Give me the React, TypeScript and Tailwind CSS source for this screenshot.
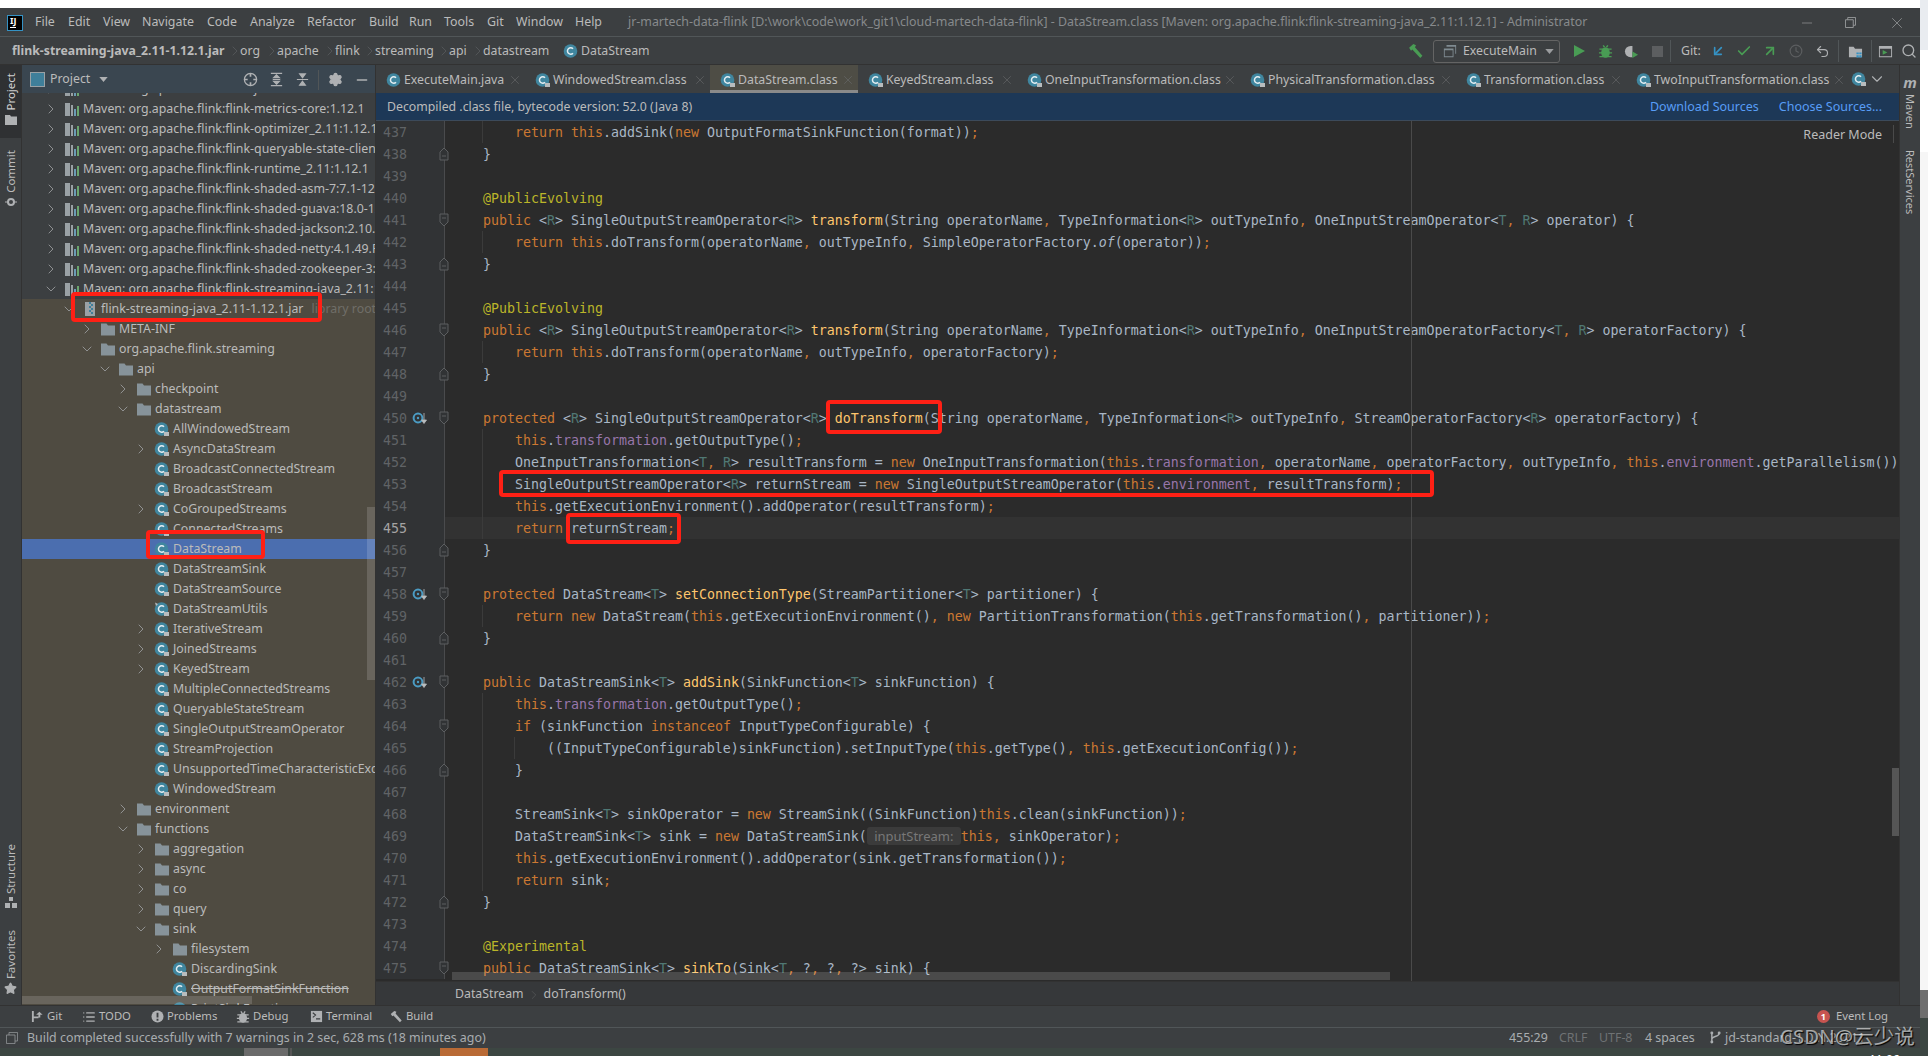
import { ReactNode } from "react";
import { ArrowDownLeft, ArrowUpRight, Check, ChevronDown, ChevronRight, Clock, List, Minus, Search, Settings, Star, Undo2, X } from "lucide-react";

/* ---------- icons ---------- */

function ClassIcon({ lock = true, pin = false }: { lock?: boolean; pin?: boolean }) {
  return (
    <svg viewBox="0 0 16 16" className="w-4 h-4 shrink-0">
      <circle cx="7.5" cy="8" r="6.8" fill="#40869f" />
      <path d="M10 5.8A3.2 3.2 0 1 0 10 10.2" fill="none" stroke="#e4eef2" strokeWidth="1.5" />
      {lock && <rect x="10" y="11" width="5" height="4" fill="#b8bcbe" />}
      {pin && <path d="M1 1.5 4 3 2 5z" fill="#b8bcbe" />}
    </svg>
  );
}

function FolderIcon() {
  return (
    <svg viewBox="0 0 16 16" className="w-4 h-4 shrink-0">
      <path d="M1 2.5h5.5l1.5 2h7v10H1z" fill="#87939a" />
    </svg>
  );
}

function LibIcon() {
  return (
    <svg viewBox="0 0 16 16" className="w-4 h-4 shrink-0">
      <path d="M1 2h5v13H1zM7 4h2v11H7z" fill="#9aa1a5" />
      <path d="M10 8h2v7h-2z" fill="#6c9cb5" />
      <path d="M13 5h2v10h-2z" fill="#6ba56f" />
    </svg>
  );
}

function JarIcon() {
  return (
    <svg viewBox="0 0 16 16" className="w-4 h-4 shrink-0">
      <rect x="3" y="1" width="10" height="14" fill="#9aa1a5" />
      <path d="M7 1h2v2H7zM9 3h2v2H9zM7 5h2v2H7zM9 7h2v2H9zM7 9h2v2H7zM9 11h2v2H9z" fill="#3f7f9a" />
    </svg>
  );
}

function OverrideIcon() {
  return (
    <svg viewBox="0 0 16 16" className="w-4 h-4">
      <circle cx="6" cy="8" r="4.4" fill="none" stroke="#4b9cc4" strokeWidth="2" />
      <circle cx="6" cy="8" r="1.2" fill="#4b9cc4" />
      <path d="M12 3v7M9.5 10h5L12 13.5z" fill="#b9bcbe" stroke="#b9bcbe" strokeWidth="0.8" />
    </svg>
  );
}

function FoldStart() {
  return (
    <svg viewBox="0 0 10 14" className="w-2.5 h-3.5">
      <path d="M1 1h8v8l-4 4-4-4z" fill="#313335" stroke="#5c5e60" />
      <path d="M3 5h4" stroke="#5c5e60" />
    </svg>
  );
}

function FoldEnd() {
  return (
    <svg viewBox="0 0 10 14" className="w-2.5 h-3.5">
      <path d="M1 13h8V5L5 1 1 5z" fill="#313335" stroke="#5c5e60" />
      <path d="M3 9h4" stroke="#5c5e60" />
    </svg>
  );
}

function Hammer({ className = "" }: { className?: string }) {
  return (
    <svg viewBox="0 0 16 16" className={className}>
      <path d="M2 4.5 6 1l2.5 1 -1 2L14.5 12 12.5 14 5 6.2 3.8 7.2z" fill="currentColor" />
    </svg>
  );
}

function BugIcon({ className = "" }: { className?: string }) {
  return (
    <svg viewBox="0 0 16 16" className={className}>
      <ellipse cx="8" cy="9" rx="4.6" ry="5.6" fill="currentColor" />
      <path d="M1.5 5.5h13M1 9.5h14M1.5 13.5h13M5.5 1.5 7 3.5M10.5 1.5 9 3.5" stroke="currentColor" strokeWidth="1.5" />
    </svg>
  );
}

/* ---------- title bar ---------- */

const menus = [
  { t: "File", w: "w-[33px]" },
  { t: "Edit", w: "w-[35px]" },
  { t: "View", w: "w-[39px]" },
  { t: "Navigate", w: "w-[65px]" },
  { t: "Code", w: "w-[43px]" },
  { t: "Analyze", w: "w-[57px]" },
  { t: "Refactor", w: "w-[62px]" },
  { t: "Build", w: "w-[40px]" },
  { t: "Run", w: "w-[35px]" },
  { t: "Tools", w: "w-[43px]" },
  { t: "Git", w: "w-[29px]" },
  { t: "Window", w: "w-[59px]" },
  { t: "Help", w: "w-[53px]" },
];

function TitleBar() {
  return (
    <div className="h-[29px] shrink-0 flex items-center bg-[#3c3f41] border-b border-[#515658] text-[12.4px] text-[#bbbbbb] pt-px">
      <div className="ml-[7px] mr-[12px] w-4 h-4 bg-black border border-[#3592c4] text-white text-[9px] font-bold leading-[8px] pl-[2px] pt-[1px]">
        IJ
        <div className="w-[6px] h-px mt-[2px] bg-white" />
      </div>
      {menus.map((m) => (
        <div key={m.t} className={`${m.w} shrink-0`}>
          {m.t}
        </div>
      ))}
      <div className="text-[#878a8c] whitespace-nowrap">
        jr-martech-data-flink [D:\work\code\work_git1\cloud-martech-data-flink] - DataStream.class [Maven: org.apache.flink:flink-streaming-java_2.11:1.12.1] - Administrator
      </div>
      <div className="ml-auto flex items-center text-[#9a9c9e]">
        <Minus className="w-4 h-4 mr-[30px]" strokeWidth={1} />
        <svg viewBox="0 0 12 12" className="w-[11px] h-[11px] mr-[32px]">
          <path d="M.5 3h8.5v8.500H.5zM3 3V.5h8.500V9H9" fill="none" stroke="currentColor" />
        </svg>
        <X className="w-[18px] h-[18px] mr-[14px]" strokeWidth={1} />
      </div>
    </div>
  );
}

/* ---------- navigation bar ---------- */

const crumbs = [
  { t: "org", w: "w-[37px]" },
  { t: "apache", w: "w-[58px]" },
  { t: "flink", w: "w-[40px]" },
  { t: "streaming", w: "w-[74px]" },
  { t: "api", w: "w-[34px]" },
  { t: "datastream", w: "w-[80px]" },
];

function Sep() {
  return <div className="w-px h-[22px] bg-[#515658]" />;
}

function NavButton({ children }: { children: ReactNode }) {
  return <div className="w-[26px] flex justify-center">{children}</div>;
}

function NavBar() {
  return (
    <div className="h-[28px] shrink-0 flex items-center bg-[#3c3f41] border-b border-[#323232] text-[12.3px] text-[#bbbbbb] pt-px">
      <div className="w-[240px] pl-3 font-bold shrink-0 whitespace-nowrap">flink-streaming-java_2.11-1.12.1.jar</div>
      {crumbs.map((c) => (
        <div key={c.t} className={`${c.w} shrink-0 relative`}>
          {c.t}
          <ChevronRight className="absolute -left-[13px] top-[1px] w-4 h-4 text-[#5e6163]" strokeWidth={1} />
        </div>
      ))}
      <ClassIcon lock={false} />
      <div className="ml-[2px]">DataStream</div>
      <div className="ml-auto flex items-center">
        <Hammer className="w-[17px] h-[17px] text-[#499c54] mr-[9px]" />
        <div className="w-[127px] h-[23px] flex items-center border border-[#646464] rounded-[3px] pl-[9px]">
          <svg viewBox="0 0 16 16" className="w-[14px] h-[14px] mr-[6px] text-[#7f8b91]">
            <path d="M4 1h11v10h-1V3H4zM1 5h11v10H1zM2 7v7h9V7z" fill="currentColor" />
          </svg>
          ExecuteMain
          <svg viewBox="0 0 10 6" className="w-[9px] h-[5px] ml-[8px] text-[#9a9c9e]">
            <path d="M0 0h10L5 6z" fill="currentColor" />
          </svg>
        </div>
        <div className="w-[6px]" />
        <NavButton>
          <svg viewBox="0 0 14 14" className="w-[14px] h-[14px] text-[#499c54]">
            <path d="M2 1l11 6-11 6z" fill="currentColor" />
          </svg>
        </NavButton>
        <NavButton>
          <BugIcon className="w-[15px] h-[15px] text-[#499c54]" />
        </NavButton>
        <NavButton>
          <svg viewBox="0 0 16 16" className="w-[15px] h-[15px]">
            <path d="M7 2A6 6 0 1 0 7 14H9V2z" fill="#afb1b3" />
            <path d="M9 8l6 3.500-6 3.500z" fill="#499c54" />
          </svg>
        </NavButton>
        <NavButton>
          <div className="w-[11px] h-[11px] bg-[#5c5e60]" />
        </NavButton>
        <div className="mr-[10px]">
          <Sep />
        </div>
        <div className="w-[24px]">Git:</div>
        <NavButton>
          <ArrowDownLeft className="w-4 h-4 text-[#3592c4]" strokeWidth={2.5} />
        </NavButton>
        <NavButton>
          <Check className="w-4 h-4 text-[#499c54]" strokeWidth={2.5} />
        </NavButton>
        <NavButton>
          <ArrowUpRight className="w-4 h-4 text-[#499c54]" strokeWidth={2.5} />
        </NavButton>
        <NavButton>
          <Clock className="w-[14px] h-[14px] text-[#5c5e60]" />
        </NavButton>
        <NavButton>
          <Undo2 className="w-[15px] h-[15px] text-[#afb1b3]" strokeWidth={1.8} />
        </NavButton>
        <div className="ml-[3px]">
          <Sep />
        </div>
        <div className="w-[32px] flex justify-center">
          <svg viewBox="0 0 16 16" className="w-[15px] h-[15px]">
            <path d="M1 3h5l1.500 2H15v9H1z" fill="#afb1b3" />
            <path d="M9 9h2.500v2H9zM12 9h2.500v2H12zM9 12h2.500v2.500H9zM12 12h2.500v2.500H12z" fill="#3592c4" />
          </svg>
        </div>
        <Sep />
        <div className="w-[26px] flex justify-center">
          <svg viewBox="0 0 16 16" className="w-[15px] h-[15px]">
            <path d="M1 2h14v12H1zM2 5v8h12V5z" fill="#afb1b3" />
            <path d="M5 6.500l5 2.500-5 2.500z" fill="#499c54" />
          </svg>
        </div>
        <div className="w-[22px] flex justify-center">
          <Search className="w-4 h-4 text-[#afb1b3]" strokeWidth={2} />
        </div>
      </div>
    </div>
  );
}

/* ---------- side strips ---------- */

function LeftStrip() {
  return (
    <div className="w-[22px] shrink-0 flex flex-col items-center bg-[#3c3f41] border-r border-[#323232] text-[11.5px] text-[#bbbbbb]">
      <div className="w-full h-[73px] bg-[#2f3133] flex flex-col items-center pt-[8px]">
        <span className="[writing-mode:vertical-rl] rotate-180 text-[#d0d0d0]">Project</span>
        <svg viewBox="0 0 12 12" className="w-[12px] h-[12px] mt-[3px] text-[#afb1b3]">
          <path d="M0 1h5l1 1.500h6V11H0z" fill="currentColor" />
        </svg>
      </div>
      <span className="[writing-mode:vertical-rl] rotate-180 mt-[12px]">Commit</span>
      <svg viewBox="0 0 12 12" className="w-[12px] h-[12px] mt-[3px] text-[#afb1b3]">
        <circle cx="6" cy="6" r="3" fill="none" stroke="currentColor" strokeWidth="2" />
        <path d="M0 6h3M9 6h3" stroke="currentColor" />
      </svg>
      <span className="[writing-mode:vertical-rl] rotate-180 mt-[636px]">Structure</span>
      <svg viewBox="0 0 12 12" className="w-[12px] h-[12px] mt-[3px] text-[#afb1b3]">
        <path d="M4 0h4v4H4zM0 6h5v5H0zM7 6h5v5H7z" fill="currentColor" />
      </svg>
      <span className="[writing-mode:vertical-rl] rotate-180 mt-[21px]">Favorites</span>
      <Star className="w-[13px] h-[13px] mt-[3px] text-[#afb1b3] fill-[#afb1b3]" />
    </div>
  );
}

function RightStrip() {
  return (
    <div className="w-[21px] shrink-0 flex flex-col items-center bg-[#3c3f41] border-l border-[#323232] text-[11px] text-[#bbbbbb]">
      <span className="mt-[5px] text-[15px] leading-[24px] font-bold italic text-[#afb1b3]">m</span>
      <span className="[writing-mode:vertical-rl]">Maven</span>
      <span className="[writing-mode:vertical-rl] mt-[21px]">RestServices</span>
    </div>
  );
}

/* ---------- project tree ---------- */

type TreeRow = {
  t: string;
  level: number;
  arrow?: "open" | "closed";
  kind: "lib" | "jar" | "folder" | "class";
  scope?: boolean;
  selected?: boolean;
  strike?: boolean;
  pin?: boolean;
  hint?: string;
};

const mavenRow = (t: string, open = false): TreeRow => ({ t: `Maven: org.apache.flink:flink-${t}`, level: 0, arrow: open ? "open" : "closed", kind: "lib" });
const folderRow = (t: string, level: number, open = false): TreeRow => ({ t, level, arrow: open ? "open" : "closed", kind: "folder", scope: true });
const classRow = (t: string, level = 5, arrow?: "closed"): TreeRow => ({ t, level, arrow, kind: "class", scope: true });

const tree: TreeRow[] = [
  mavenRow("json:1.12.1"),
  mavenRow("metrics-core:1.12.1"),
  mavenRow("optimizer_2.11:1.12.1"),
  mavenRow("queryable-state-client-java:1.12.1"),
  mavenRow("runtime_2.11:1.12.1"),
  mavenRow("shaded-asm-7:7.1-12.0"),
  mavenRow("shaded-guava:18.0-12.0"),
  mavenRow("shaded-jackson:2.10.1-12.0"),
  mavenRow("shaded-netty:4.1.49.Final-12.0"),
  mavenRow("shaded-zookeeper-3:3.4.14-12.0"),
  mavenRow("streaming-java_2.11:1.12.1", true),
  { t: "flink-streaming-java_2.11-1.12.1.jar", level: 1, arrow: "open", kind: "jar", scope: true, hint: "library root" },
  folderRow("META-INF", 2),
  folderRow("org.apache.flink.streaming", 2, true),
  folderRow("api", 3, true),
  folderRow("checkpoint", 4),
  folderRow("datastream", 4, true),
  classRow("AllWindowedStream"),
  classRow("AsyncDataStream", 5, "closed"),
  classRow("BroadcastConnectedStream"),
  classRow("BroadcastStream"),
  classRow("CoGroupedStreams", 5, "closed"),
  classRow("ConnectedStreams"),
  { ...classRow("DataStream"), selected: true },
  classRow("DataStreamSink"),
  classRow("DataStreamSource"),
  { ...classRow("DataStreamUtils"), pin: true },
  classRow("IterativeStream", 5, "closed"),
  classRow("JoinedStreams", 5, "closed"),
  classRow("KeyedStream", 5, "closed"),
  classRow("MultipleConnectedStreams"),
  classRow("QueryableStateStream"),
  classRow("SingleOutputStreamOperator"),
  classRow("StreamProjection"),
  classRow("UnsupportedTimeCharacteristicException"),
  classRow("WindowedStream"),
  folderRow("environment", 4),
  folderRow("functions", 4, true),
  folderRow("aggregation", 5),
  folderRow("async", 5),
  folderRow("co", 5),
  folderRow("query", 5),
  folderRow("sink", 5, true),
  folderRow("filesystem", 6),
  classRow("DiscardingSink", 6),
  { ...classRow("OutputFormatSinkFunction", 6), strike: true },
  classRow("PrintSinkFunction", 6),
];

function TreeItem({ row }: { row: TreeRow }) {
  const bg = row.selected ? "bg-[#4b6eaf]" : row.scope ? "bg-[#4f4b41]" : "bg-[#3c3f41]";
  return (
    <div className={`h-5 shrink-0 flex items-center whitespace-nowrap ${bg}`} style={{ paddingLeft: 21 + 18 * row.level }}>
      <div className="w-4 shrink-0 text-[#9a9c9e]">
        {row.arrow === "open" && <ChevronDown className="w-4 h-4" strokeWidth={1.3} />}
        {row.arrow === "closed" && <ChevronRight className="w-4 h-4" strokeWidth={1.3} />}
      </div>
      <div className="ml-[5px] w-4 shrink-0">
        {row.kind === "lib" && <LibIcon />}
        {row.kind === "jar" && <JarIcon />}
        {row.kind === "folder" && <FolderIcon />}
        {row.kind === "class" && <ClassIcon pin={row.pin} />}
      </div>
      <span className={`ml-[3px] ${row.strike ? "line-through" : ""}`}>{row.t}</span>
      {row.hint && <span className="ml-[8px] text-[#6f6e68]">{row.hint}</span>}
    </div>
  );
}

function ProjectPanel() {
  return (
    <div className="w-[354px] shrink-0 flex flex-col bg-[#4f4b41] text-[12.35px] text-[#bbbbbb] border-r border-[#323232]">
      <div className="h-[28px] shrink-0 flex items-center bg-[#3a4650] pl-2 pt-px">
        <div className="w-[15px] h-[15px] border border-[#9aa1a5] bg-[#3f7f9a] mr-[5px]" />
        <span>Project</span>
        <svg viewBox="0 0 10 6" className="w-[9px] h-[5px] ml-[9px] text-[#afb1b3]">
          <path d="M0 0h10L5 6z" fill="currentColor" />
        </svg>
        <div className="ml-auto flex items-center text-[#afb1b3]">
          <svg viewBox="0 0 16 16" className="w-[15px] h-[15px] mr-[11px]">
            <circle cx="8" cy="8" r="6.500" fill="none" stroke="currentColor" strokeWidth="1.400" />
            <path d="M8 1v4M8 11v4M1 8h4M11 8h4" stroke="currentColor" strokeWidth="1.800" />
          </svg>
          <svg viewBox="0 0 16 16" className="w-[15px] h-[15px] mr-[11px]">
            <path d="M2 1.500h12M2 14.500h12M8 3l3 3H5zM8 13l-3-3h6zM4 8h8" stroke="currentColor" strokeWidth="1.300" fill="currentColor" />
          </svg>
          <svg viewBox="0 0 16 16" className="w-[15px] h-[15px] mr-[8px]">
            <path d="M2 8h12M8 6 5 2h6zM8 10l3 4H5z" stroke="currentColor" strokeWidth="1.300" fill="currentColor" />
          </svg>
          <div className="w-px h-[20px] bg-[#515658] mr-[9px]" />
          <Settings className="w-[15px] h-[15px] mr-[11px] fill-[#afb1b3]" />
          <Minus className="w-4 h-4 mr-[5px]" strokeWidth={2} />
        </div>
      </div>
      <div className="relative flex-1 overflow-hidden">
        <div className="flex flex-col -mt-[14px]">
          {tree.map((r, i) => (
            <TreeItem key={i} row={r} />
          ))}
        </div>
        <div className="absolute left-[345px] top-[414px] w-2 h-[173px] bg-white/15" />
        <div className="absolute left-0 top-[903px] w-[230px] h-2 bg-white/15" />
      </div>
    </div>
  );
}

/* ---------- editor ---------- */

const tabs = [
  { t: "ExecuteMain.java", w: "w-[149px]" },
  { t: "WindowedStream.class", w: "w-[185px]" },
  { t: "DataStream.class", w: "w-[148px]", active: true },
  { t: "KeyedStream.class", w: "w-[159px]" },
  { t: "OneInputTransformation.class", w: "w-[223px]" },
  { t: "PhysicalTransformation.class", w: "w-[216px]" },
  { t: "Transformation.class", w: "w-[170px]" },
  { t: "TwoInputTransformation.class", w: "w-[223px]" },
];

function TabBar() {
  return (
    <div className="h-[28px] shrink-0 flex items-stretch bg-[#3c3f41] text-[12.3px] text-[#bbbbbb] overflow-hidden">
      {tabs.map((t) => (
        <div key={t.t} className={`${t.w} shrink-0 flex items-center pl-[10px] pr-[3px] whitespace-nowrap ${t.active ? "bg-[#4e4d45] border-b-[3px] border-[#8a8a8a] pt-[5px]" : "pt-[2px]"}`}>
          <ClassIcon lock={t.t !== "ExecuteMain.java"} />
          <span className="ml-[2px]">{t.t}</span>
          <X className="ml-auto w-[14px] h-[14px] text-[#6a6c6e]" strokeWidth={1} />
        </div>
      ))}
      <div className="ml-[2px] w-[16px] flex items-center overflow-hidden">
        <ClassIcon />
      </div>
      <ChevronDown className="ml-[1px] w-[18px] h-[18px] self-center text-[#afb1b3]" strokeWidth={1.5} />
    </div>
  );
}

const source = `        return this.addSink(new OutputFormatSinkFunction(format));
    }

    @PublicEvolving
    public <R> SingleOutputStreamOperator<R> transform(String operatorName, TypeInformation<R> outTypeInfo, OneInputStreamOperator<T, R> operator) {
        return this.doTransform(operatorName, outTypeInfo, SimpleOperatorFactory.of(operator));
    }

    @PublicEvolving
    public <R> SingleOutputStreamOperator<R> transform(String operatorName, TypeInformation<R> outTypeInfo, OneInputStreamOperatorFactory<T, R> operatorFactory) {
        return this.doTransform(operatorName, outTypeInfo, operatorFactory);
    }

    protected <R> SingleOutputStreamOperator<R> doTransform(String operatorName, TypeInformation<R> outTypeInfo, StreamOperatorFactory<R> operatorFactory) {
        this.transformation.getOutputType();
        OneInputTransformation<T, R> resultTransform = new OneInputTransformation(this.transformation, operatorName, operatorFactory, outTypeInfo, this.environment.getParallelism());
        SingleOutputStreamOperator<R> returnStream = new SingleOutputStreamOperator(this.environment, resultTransform);
        this.getExecutionEnvironment().addOperator(resultTransform);
        return returnStream;
    }

    protected DataStream<T> setConnectionType(StreamPartitioner<T> partitioner) {
        return new DataStream(this.getExecutionEnvironment(), new PartitionTransformation(this.getTransformation(), partitioner));
    }

    public DataStreamSink<T> addSink(SinkFunction<T> sinkFunction) {
        this.transformation.getOutputType();
        if (sinkFunction instanceof InputTypeConfigurable) {
            ((InputTypeConfigurable)sinkFunction).setInputType(this.getType(), this.getExecutionConfig());
        }

        StreamSink<T> sinkOperator = new StreamSink((SinkFunction)this.clean(sinkFunction));
        DataStreamSink<T> sink = new DataStreamSink(~this, sinkOperator);
        this.getExecutionEnvironment().addOperator(sink.getTransformation());
        return sink;
    }

    @Experimental
    public DataStreamSink<T> sinkTo(Sink<T, ?, ?, ?> sink) {`.split("\n");

const tokenRe =
  /(~|@\w+|\b(?:public|protected|return|new|this|if|instanceof)\b|[;,]|\b[TR]\b|(?<=this\.)(?:transformation|environment)\b|(?<=> )(?:transform|doTransform|setConnectionType|addSink|sinkTo)(?=\()|(?<=Factory\.)of\b)/;

function tokenClass(tok: string, i: number, all: string[]) {
  if (/^@/.test(tok)) return "text-[#bbb529]";
  if (/^(public|protected|return|new|this|if|instanceof|;|,)$/.test(tok)) return "text-[#cc7832]";
  if (/^[TR]$/.test(tok)) return "text-[#507874]";
  if (/^(transformation|environment)$/.test(tok)) return "text-[#9876aa]";
  if (/^(transform|doTransform|setConnectionType|addSink|sinkTo)$/.test(tok) && /> $/.test(all[i - 1] ?? "")) return "text-[#ffc66d]";
  if (tok === "of") return "italic";
  return "";
}

function CodeText({ line }: { line: string }) {
  const parts = line.split(tokenRe);
  return (
    <>
      {parts.map((p, i) =>
        p === "~" ? (
          <span key={i} className="inline-block w-[94px] text-center font-['Noto_Sans'] text-[13px] leading-[18px] text-[#787878] bg-[#3b3b3b] rounded-[3px]">
            inputStream:
          </span>
        ) : (
          <span key={i} className={tokenClass(p, i, parts)}>
            {p}
          </span>
        ),
      )}
    </>
  );
}

const overrides = [450, 458, 462];
const foldStarts = [441, 446, 450, 458, 462, 464, 475];
const foldEnds = [438, 443, 448, 456, 460, 466, 472];
const firstLine = 437;
const caretLine = 455;
const guided = [437, 442, 447, 451, 452, 453, 454, 455, 459, 463, 464, 465, 466, 467, 468, 469, 470, 471];

function CodeRow({ line, n }: { line: string; n: number }) {
  const caret = n === caretLine;
  return (
    <div className="h-[22px] shrink-0 flex">
      <div className={`relative w-[69px] shrink-0 bg-[#313335] border-r border-[#4a4b4d] flex items-center ${caret ? "text-[#a4a3a3]" : "text-[#606366]"}`}>
        <span className="ml-[7px] pt-[2px]">{n}</span>
        {overrides.includes(n) && (
          <span className="absolute left-[36px] top-[3px]">
            <OverrideIcon />
          </span>
        )}
        {foldStarts.includes(n) && (
          <span className="absolute -right-[5px] top-[4px] z-10">
            <FoldStart />
          </span>
        )}
        {foldEnds.includes(n) && (
          <span className="absolute -right-[5px] top-[4px] z-10">
            <FoldEnd />
          </span>
        )}
      </div>
      <div className={`relative flex-1 min-w-0 pl-[6px] overflow-hidden whitespace-pre leading-[24px] ${caret ? "bg-[#323232]" : ""}`}>
        {guided.includes(n) && <span className="absolute left-[37px] top-0 bottom-0 w-px bg-[#3b3b3b]" />}
        {n === 465 && <span className="absolute left-[69px] top-0 bottom-0 w-px bg-[#3b3b3b]" />}
        <span className="relative">
          <CodeText line={line} />
        </span>
      </div>
    </div>
  );
}

function Box({ className }: { className: string }) {
  return <div className={`absolute border-[4px] border-[#ff2015] rounded-[4px] ${className}`} />;
}

function Editor() {
  return (
    <div className="flex-1 min-w-0 flex flex-col bg-[#2b2b2b] relative">
      <TabBar />
      <div className="h-[28px] shrink-0 flex items-center bg-[#1d3857] border-b border-[#3c4a5a] text-[12.3px] text-[#bbbbbb] pl-[11px] pr-[17px] pt-[2px]">
        <span>Decompiled .class file, bytecode version: 52.0 (Java 8)</span>
        <span className="ml-auto text-[12.5px] text-[#589df6]">Download Sources</span>
        <span className="ml-[20px] text-[12.5px] text-[#589df6]">Choose Sources...</span>
      </div>
      <div className="relative flex-1 min-h-0 flex flex-col overflow-hidden font-['DejaVu_Sans_Mono'] text-[13.29px] text-[#a9b7c6]">
        {source.map((l, i) => (
          <CodeRow key={i} line={l} n={firstLine + i} />
        ))}
        {/* right margin and scrollbars */}
        <div className="absolute left-[1035px] top-0 bottom-0 w-px bg-[#4a4a4a]" />
        <div className="absolute left-[76px] top-[851px] w-[938px] h-2 bg-white/15" />
        <div className="absolute right-0 top-[647px] w-[7px] h-[68px] bg-white/20" />
        <div className="absolute right-[17px] top-[3px] font-['Noto_Sans'] text-[12.5px] leading-[22px] text-[#bbbbbb]">Reader Mode</div>
        <div className="absolute right-[5px] top-[4px] w-px h-[18px] bg-[#4a4a4a]" />
      </div>
      <div className="h-[24px] shrink-0 flex items-center bg-[#36383a] border-t border-[#323232] text-[12.3px] text-[#bbbbbb] pl-[79px] pt-[2px]">
        <span>DataStream</span>
        <ChevronRight className="w-[14px] h-[14px] mx-[3px] text-[#5e6163]" strokeWidth={1} />
        <span>doTransform()</span>
      </div>
    </div>
  );
}

/* ---------- bottom bars ---------- */

function ToolButton({ icon, label, w }: { icon: ReactNode; label: string; w: string }) {
  return (
    <div className={`${w} shrink-0 flex items-center`}>
      <span className="w-4 h-4 flex items-center justify-center text-[#afb1b3]">{icon}</span>
      <span className="ml-[2px]">{label}</span>
    </div>
  );
}

function ToolBar() {
  return (
    <div className="h-[22px] shrink-0 flex items-center bg-[#3c3f41] border-t border-[#323232] text-[11.3px] text-[#bbbbbb] pl-[29px] pr-[32px]">
      <ToolButton
        w="w-[52px]"
        label="Git"
        icon={
          <svg viewBox="0 0 14 14" className="w-[13px] h-[13px]">
            <path d="M1 1h2v12H1zM3 7h5v2H3zM9 2l3.500 3H10v3H8V5H5.500z" fill="currentColor" />
          </svg>
        }
      />
      <ToolButton w="w-[68px]" label="TODO" icon={<List className="w-[14px] h-[14px]" strokeWidth={2.2} />} />
      <ToolButton
        w="w-[86px]"
        label="Problems"
        icon={
          <svg viewBox="0 0 14 14" className="w-[13px] h-[13px]">
            <circle cx="7" cy="7" r="6.500" fill="currentColor" />
            <path d="M6 3h2v5H6zM6 9.500h2v2H6z" fill="#3c3f41" />
          </svg>
        }
      />
      <ToolButton w="w-[73px]" label="Debug" icon={<BugIcon className="w-[14px] h-[14px]" />} />
      <ToolButton
        w="w-[80px]"
        label="Terminal"
        icon={
          <svg viewBox="0 0 14 14" className="w-[13px] h-[13px]">
            <path d="M1 1h12v12H1z" fill="currentColor" />
            <path d="M3 3l3 2.500L3 8M6.500 9.500H11" fill="none" stroke="#3c3f41" strokeWidth="1.200" />
          </svg>
        }
      />
      <ToolButton w="w-[60px]" label="Build" icon={<Hammer className="w-[14px] h-[14px]" />} />
      <div className="ml-auto flex items-center">
        <span className="w-[13px] h-[13px] rounded-full bg-[#c75450] text-white text-[9px] leading-[13px] text-center font-bold mr-[6px]">1</span>
        Event Log
      </div>
    </div>
  );
}

function StatusBar() {
  return (
    <div className="h-[21px] shrink-0 flex items-center bg-[#3c3f41] border-t border-[#515658] text-[12.4px] text-[#a9adb0] pl-[6px]">
      <svg viewBox="0 0 14 14" className="w-[12px] h-[12px] mr-[9px] text-[#8f9295]">
        <path d="M.5 3.500h10v10H.5zM3.500 3.500V.5h10v10h-3" fill="none" stroke="currentColor" />
      </svg>
      <span>Build completed successfully with 7 warnings in 2 sec, 628 ms (18 minutes ago)</span>
      <div className="ml-auto flex items-center w-[411px] shrink-0 whitespace-nowrap overflow-hidden">
        <span className="w-[50px] shrink-0">455:29</span>
        <span className="w-[40px] shrink-0 text-[#6f7274]">CRLF</span>
        <span className="w-[46px] shrink-0 text-[#6f7274]">UTF-8</span>
        <span className="w-[65px] shrink-0">4 spaces</span>
        <svg viewBox="0 0 12 14" className="w-[11px] h-[13px] mr-[4px] shrink-0 text-[#a9adb0]">
          <path d="M2 2v10M10 2c0 5-8 3-8 7" fill="none" stroke="currentColor" strokeWidth="1.600" />
          <circle cx="2" cy="2" r="1.600" fill="currentColor" />
          <circle cx="10" cy="2" r="1.600" fill="currentColor" />
          <circle cx="2" cy="12" r="1.600" fill="currentColor" />
        </svg>
        <span>jd-standard-1.0.N.20211</span>
      </div>
    </div>
  );
}

function Taskbar() {
  return (
    <div className="relative h-2 shrink-0 flex bg-[#3c4642] overflow-hidden">
      <div className="ml-[244px] w-[44px] bg-[#6a6a6a]" />
      <div className="ml-[2px] w-[2px] bg-[#555]" />
      <div className="ml-[148px] w-[48px] bg-[#b96a35]" />
      <span className="absolute left-[1869px] top-[4px] text-[12px] leading-4 text-white font-['Noto_Sans']">11:06</span>
    </div>
  );
}

export default function App() {
  return (
    <div className="relative w-[1928px] h-[1056px] flex overflow-hidden bg-white font-['Noto_Sans']">
      <div className="w-[1920px] shrink-0 flex flex-col">
        <div className="h-2 shrink-0 bg-white" />
        <TitleBar />
        <NavBar />
        <div className="flex-1 min-h-0 flex">
          <LeftStrip />
          <ProjectPanel />
          <Editor />
          <RightStrip />
        </div>
        <ToolBar />
        <StatusBar />
        <Taskbar />
      </div>
      <div className="w-2 shrink-0 flex flex-col">
        <div className="h-[50px] bg-[#e9ecf0]" />
        <div className="h-[102px] bg-white" />
        <div className="h-[838px] bg-[#f6f6f6]" />
        <div className="h-[28px] bg-[#6e6e6e]" />
        <div className="flex-1 bg-[#3c4642]" />
      </div>

      {/* red annotation boxes drawn over the screenshot */}
      <Box className="left-[71px] top-[292px] w-[251px] h-[30px]" />
      <Box className="left-[146px] top-[530px] w-[119px] h-[29px]" />
      <Box className="left-[826px] top-[400px] w-[116px] h-[34px]" />
      <Box className="left-[499px] top-[470px] w-[935px] h-[27px]" />
      <Box className="left-[566px] top-[513px] w-[115px] h-[31px]" />

      <div className="absolute left-[1780px] top-[1022px] text-[20.5px] leading-7 text-white/60 font-['Noto_Sans','Noto_Sans_CJK_SC',sans-serif] [text-shadow:1px_1px_1px_#000] whitespace-nowrap">
        CSDN@云少说
      </div>
    </div>
  );
}
